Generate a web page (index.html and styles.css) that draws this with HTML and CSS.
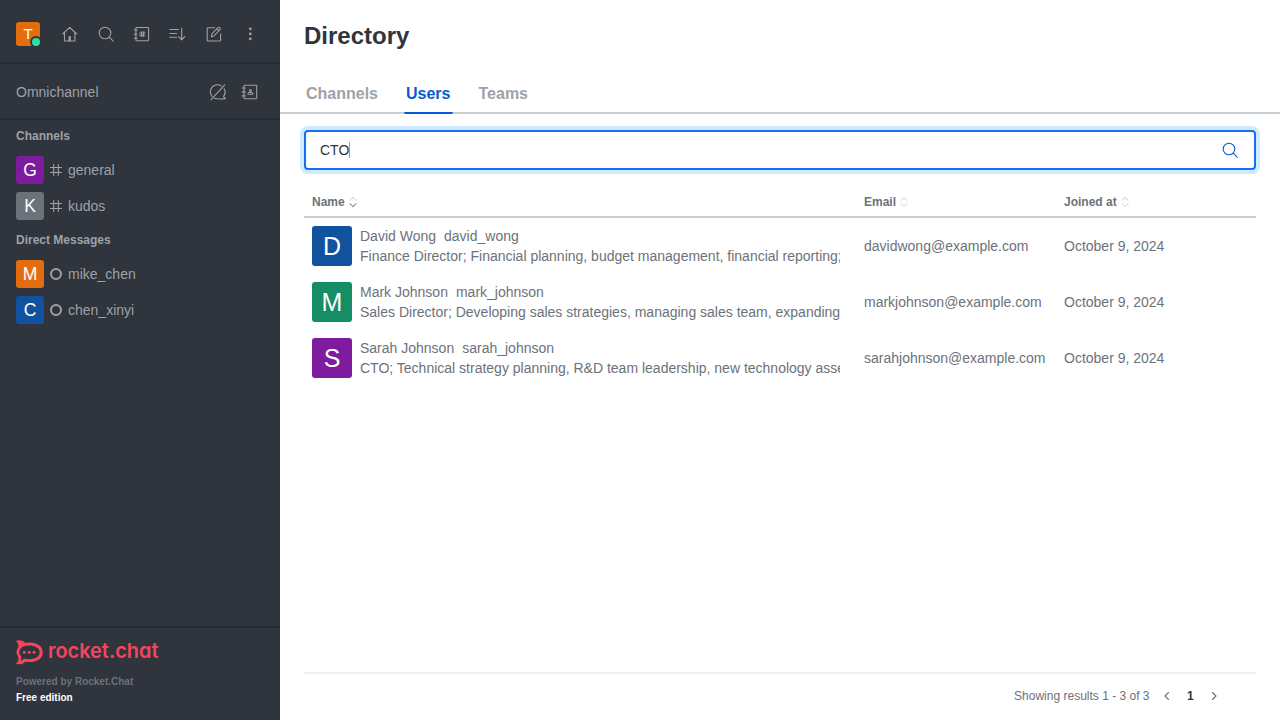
FILE: index.html
```html
<!DOCTYPE html>
<html lang="en">
<head>
<meta charset="utf-8">
<title>Directory</title>
<link rel="stylesheet" href="styles.css">
</head>
<body>
<div class="app">
  <aside class="sidebar">
    <header class="topbar">
      <div class="avatar avatar-s orange">T<span class="presence"></span></div>
      <nav class="tools">
        <svg class="icon" viewBox="0 0 20 20"><path d="M2.700 10 9.700 3.300l7 6.700M4.500 8.700v8.300h10.400V8.700"/><path class="solid" d="M8.500 12.200h2.400v5H8.500z"/></svg>
        <svg class="icon" viewBox="0 0 20 20"><circle cx="9" cy="9" r="5.800"/><path d="m13.200 13.200 4 4"/></svg>
        <svg class="icon" viewBox="0 0 20 20"><rect x="3.900" y="3.500" width="12.700" height="13.200" rx=".6"/><path d="M2.200 6h2.900M2.200 10.200h2.900M2.200 14.300h2.900M9.700 7.600 9.200 12.600M11.800 7.600l-.5 5M7.800 9h5.200M7.600 11.300h5.200"/></svg>
        <svg class="icon" viewBox="0 0 20 20"><path d="M1.800 5.500h8.700M1.800 9.500h6.700M1.800 13.200h6.700M13.700 4v11.800m-3.100-3.100 3.100 3.100 3.100-3.100"/></svg>
        <svg class="icon" viewBox="0 0 20 20"><path d="M10.500 3.800H4a.8.8 0 0 0-.8.800v11.600a.8.8 0 0 0 .8.800h11.800a.8.8 0 0 0 .8-.8V10M7.300 12.800l.7-3.200 6-5.900c.6-.6 1.300-.5 1.900.1s.7 1.300.1 1.900l-6 6.200zM13 4.900l1.900 1.900"/></svg>
        <svg class="icon" viewBox="0 0 20 20"><g class="solid"><circle cx="10.300" cy="4.800" r="1.400"/><circle cx="10.300" cy="9.800" r="1.400"/><circle cx="10.300" cy="14.800" r="1.400"/></g></svg>
      </nav>
    </header>
    <section class="omni">
      <span>Omnichannel</span>
      <div class="omni-tools">
        <svg class="icon" viewBox="0 0 20 20"><path d="M13.300 4A7 7 0 0 0 4 14.300M6.300 16.200c2.500 1.200 6.700.7 11 .6-.2-1-1.600-1.600-1.800-2.500 1.700-2.200 2.100-5 .6-7.600M3 17.600 16.800 2.800"/></svg>
        <svg class="icon" viewBox="0 0 20 20"><rect x="4" y="3.300" width="12.700" height="13.400" rx=".6"/><path d="M2.200 6h3M2.200 9.900h3M2.200 13.900h3M8 12.300v-1.200c0-.7 4.800-.7 4.800 0v1.200z"/><circle cx="10.400" cy="8.500" r="1"/></svg>
      </div>
    </section>
    <div class="rooms">
      <h2 class="group">Channels</h2>
      <a class="room"><span class="avatar avatar-m purple">G</span><svg class="mini" viewBox="0 0 12 12"><path d="M3.700 .5v11M8.300 .5v11M.5 3.500h11M.5 8.500h11"/></svg><span>general</span></a>
      <a class="room"><span class="avatar avatar-m gray">K</span><svg class="mini" viewBox="0 0 12 12"><path d="M3.700 .5v11M8.300 .5v11M.5 3.500h11M.5 8.500h11"/></svg><span>kudos</span></a>
      <h2 class="group">Direct Messages</h2>
      <a class="room"><span class="avatar avatar-m orange">M</span><span class="offline"></span><span>mike_chen</span></a>
      <a class="room"><span class="avatar avatar-m blue">C</span><span class="offline"></span><span>chen_xinyi</span></a>
    </div>
    <footer class="brand">
      <svg class="logo" viewBox="0 0 144 26">
        <path class="bubble" fill-rule="evenodd" d="M0 1C3.600-.5 7.300.6 9.300 3c8-1.700 17.500 1.500 17.500 9.400S17.300 23.300 9.300 21.700C7.100 24.200 3.400 24.800 0 23.700c2.300-2.200 3-4.300 2.100-7.200-2.100-2.800-2.100-5.800 0-8.500C2.800 5.200 2.100 3 0 1zM4.900 8.300c-2.200 2.700-2.200 5.500.3 8 .3 1.600 0 3.100-.7 4.400 1.500-.2 2.700-.9 3.500-2.200 7.100 1.900 15.600-.2 15.600-6.200S15 4.500 7.900 6.200C6.900 6.700 5.700 7.300 4.900 8.300z"/>
        <g class="bubble"><circle cx="8.300" cy="12.300" r="1.550"/><circle cx="13.200" cy="12.300" r="1.550"/><circle cx="18.100" cy="12.300" r="1.550"/></g>
        <text class="wordmark" x="32" y="18.300" textLength="110.500" lengthAdjust="spacingAndGlyphs">rocket.chat</text>
      </svg>
      <p class="powered">Powered by Rocket.Chat</p>
      <p class="edition">Free edition</p>
    </footer>
  </aside>
  <main class="main">
    <h1 class="title">Directory</h1>
    <nav class="tabs"><a class="tab">Channels</a><a class="tab active">Users</a><a class="tab">Teams</a></nav>
    <div class="content">
      <div class="search"><span class="query">CTO</span><span class="caret"></span>
        <svg class="icon search-icon" viewBox="0 0 20 20"><circle cx="9" cy="9" r="5.800"/><path d="m13.200 13.200 4 4"/></svg>
      </div>
      <div class="row head">
        <div class="cell">Name<svg class="sort" viewBox="0 0 8 12"><path d="M1 4.300 4 1.300l3 3"/><path class="on" d="m1 7.700 3 3 3-3"/></svg></div>
        <div class="cell">Email<svg class="sort" viewBox="0 0 8 12"><path d="M1 4.300 4 1.300l3 3M1 7.700l3 3 3-3"/></svg></div>
        <div class="cell">Joined at<svg class="sort" viewBox="0 0 8 12"><path d="M1 4.300 4 1.300l3 3M1 7.700l3 3 3-3"/></svg></div>
      </div>
      <div class="row">
        <div class="cell user"><span class="avatar avatar-l blue">D</span><div class="info"><div>David Wong<span class="handle">david_wong</span></div><div class="bio">Finance Director; Financial planning, budget management, financial reporting;</div></div></div>
        <div class="cell">davidwong@example.com</div><div class="cell">October 9, 2024</div>
      </div>
      <div class="row">
        <div class="cell user"><span class="avatar avatar-l green">M</span><div class="info"><div>Mark Johnson<span class="handle">mark_johnson</span></div><div class="bio">Sales Director; Developing sales strategies, managing sales team, expanding</div></div></div>
        <div class="cell">markjohnson@example.com</div><div class="cell">October 9, 2024</div>
      </div>
      <div class="row">
        <div class="cell user"><span class="avatar avatar-l purple">S</span><div class="info"><div>Sarah Johnson<span class="handle">sarah_johnson</span></div><div class="bio">CTO; Technical strategy planning, R&amp;D team leadership, new technology asse</div></div></div>
        <div class="cell">sarahjohnson@example.com</div><div class="cell">October 9, 2024</div>
      </div>
      <footer class="pager">
        <span>Showing results 1 - 3 of 3</span>
        <svg class="chev" viewBox="0 0 8 10"><path d="M5.500 1.500 2 5l3.500 3.500"/></svg>
        <b class="page">1</b>
        <svg class="chev" viewBox="0 0 8 10"><path d="M2.500 1.500 6 5 2.500 8.500"/></svg>
      </footer>
    </div>
  </main>
</div>
</body>
</html>
```

FILE: styles.css
```css
* { box-sizing: border-box; }
body { margin: 0; font: 14px/20px "Liberation Sans", Arial, sans-serif; color: #6c727a; background: #fff; }
h1, h2, p { margin: 0; }
.app { display: flex; height: 720px; overflow: hidden; }
.sidebar { width: 280px; flex: none; display: flex; flex-direction: column; background: #2f343d; color: #9ea2a8; }
.icon { width: 20px; height: 20px; display: block; }
.icon, .mini, .sort, .chev { fill: none; stroke: currentColor; stroke-width: 1.1; stroke-linecap: round; stroke-linejoin: round; }
.icon .solid, .solid { fill: currentColor; stroke: none; }
.topbar { display: flex; align-items: center; height: 64px; padding: 6px 20px 0 16px; border-bottom: 2px solid #272b33; }
.tools { display: flex; gap: 16px; margin-left: 20px; }
.avatar { display: flex; flex: none; align-items: center; justify-content: center; color: #fff; position: relative; }
.avatar-s { width: 24px; height: 24px; border-radius: 3px; font-size: 15px; line-height: 24px; }
.avatar-m { width: 28px; height: 28px; border-radius: 3px; font-size: 17.5px; line-height: 28px; }
.avatar-l { width: 40px; height: 40px; border-radius: 3px; font-size: 25px; line-height: 40px; }
.orange { background: #e26d0e; }
.purple { background: #7f1b9f; }
.gray { background: #6c727a; }
.blue { background: #10529e; }
.green { background: #158d65; }
.presence { position: absolute; right: -2px; bottom: -2px; width: 12px; height: 12px; border: 2px solid #2f343d; border-radius: 50%; background: #2de0a5; }
.omni { display: flex; align-items: center; justify-content: space-between; height: 56px; padding: 2px 20px 0 16px; border-bottom: 2px solid #272b33; }
.omni-tools { display: flex; gap: 12px; }
.rooms { flex: 1; }
.group { height: 32px; padding-left: 16px; font-size: 12px; line-height: 32px; }
.room { display: flex; align-items: center; height: 36px; padding-left: 16px; }
.mini { width: 12px; height: 12px; margin: 0 6px; stroke-width: 1.1; }
.offline { width: 12px; height: 12px; margin: 0 6px; border: 2px solid #9ea2a8; border-radius: 50%; }
.brand { height: 94px; border-top: 2px solid #272b33; padding: 12px 16px 0; font-size: 10px; line-height: 16px; font-weight: 700; }
.logo { display: block; width: 144px; height: 26px; margin-bottom: 8px; }
.bubble, .wordmark { fill: #f5455c; }
.wordmark { font: 600 20.5px/24px Inter, sans-serif; font-feature-settings: "cv11" 1; }
.powered { color: #6c727a; }
.edition { color: #fff; }
.main { flex: 1; min-width: 0; display: flex; flex-direction: column; }
.title { height: 72px; padding: 0 24px; font-size: 24px; line-height: 72px; color: #2f343d; }
.tabs { display: flex; gap: 24px; height: 42px; padding: 0 24px; border-bottom: 2px solid #cbced1; font-size: 16px; font-weight: 700; color: #9ea2a8; }
.tab { height: 42px; padding: 0 2px; line-height: 43px; }
.active { color: #095ad2; border-bottom: 2px solid #095ad2; border-radius: 2px; }
.content { flex: 1; display: flex; flex-direction: column; padding: 16px 24px 0; }
.search { display: flex; align-items: center; height: 40px; padding: 0 14px; border: 2px solid #156ff5; border-radius: 4px; box-shadow: 0 0 0 4px #d1ebfe; color: #2f343d; }
.caret { width: 1px; height: 16px; background: #7fa3d8; }
.search-icon { margin-left: auto; color: #095ad2; }
.row { display: grid; grid-template-columns: 552px 200px 200px; height: 56px; align-items: center; }
.cell { padding: 0 8px; white-space: nowrap; min-width: 0; }
.head { height: 32px; margin-top: 16px; padding-top: 2px; border-bottom: 2px solid #cbced1; font-size: 12px; font-weight: 700; }
.head .cell { display: flex; align-items: center; }
.sort { width: 8px; height: 12px; margin-left: 4px; color: #dcdfe2; }
.on { stroke: #8b9098; }
.user { display: flex; gap: 8px; }
.info { width: 480px; overflow: hidden; }
.handle { margin-left: 8px; }
.bio { overflow: hidden; }
.pager { display: flex; align-items: center; justify-content: flex-end; height: 48px; margin-top: auto; padding: 0 38px 2px 0; border-top: 2px solid #eeeff1; font-size: 12px; }
.chev { width: 8px; height: 10px; }
.page { width: 7px; margin: 0 16px; color: #2f343d; }
.pager span { margin-right: 13.500px; }
```
